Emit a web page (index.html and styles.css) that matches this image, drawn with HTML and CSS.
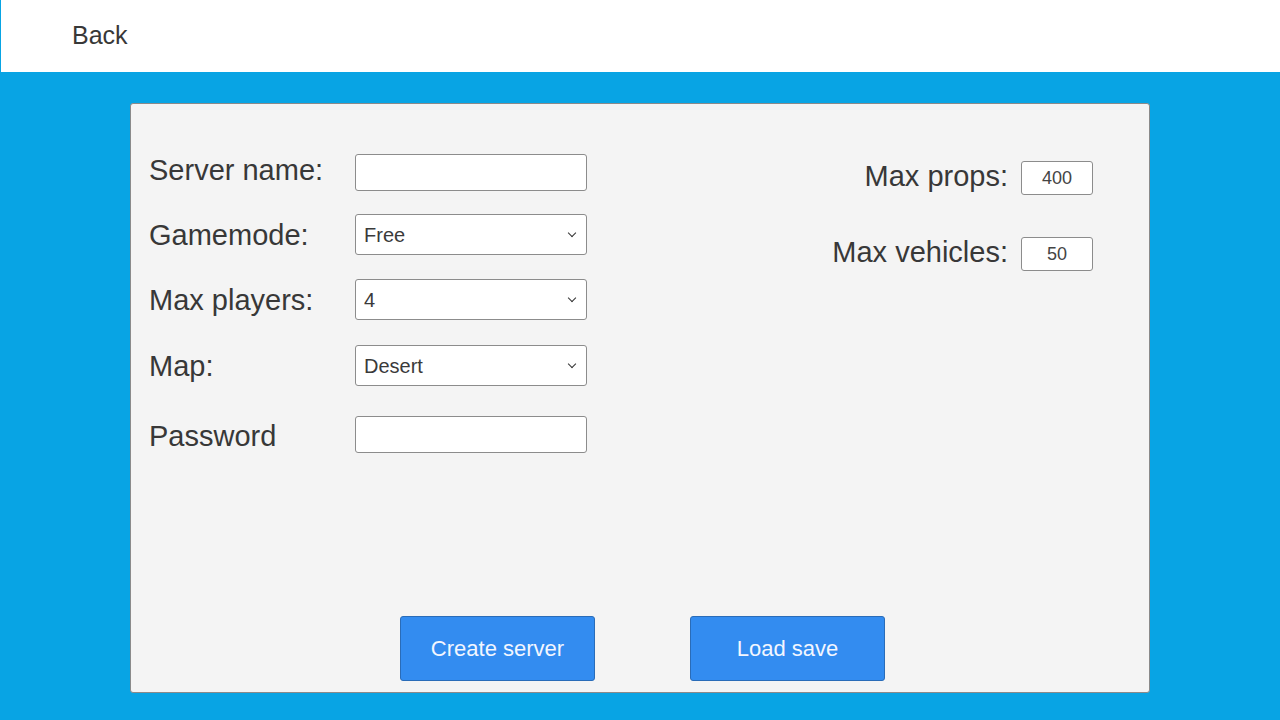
FILE: index.html
```html
<html>
    <head>
        <link rel="stylesheet" href="styles.css">
    </head>
    <body>
        <div class="topbar">
            <span class="back">Back</span>
        </div>

        <div class="panel">
            <div class="settings">
                <div class="left">
                    <div class="field first">
                        <label for="name">Server name:</label>
                        <input id="name" type="text">
                    </div>
                    <div class="field">
                        <label for="mode">Gamemode:</label>
                        <div class="dropdown"><select id="mode"><option>Free</option></select></div>
                    </div>
                    <div class="field">
                        <label for="players">Max players:</label>
                        <div class="dropdown"><select id="players"><option>4</option></select></div>
                    </div>
                    <div class="field map">
                        <label for="map">Map:</label>
                        <div class="dropdown"><select id="map"><option>Desert</option></select></div>
                    </div>
                    <div class="field pass">
                        <label for="password">Password</label>
                        <input id="password" type="text">
                    </div>
                </div>

                <div class="right">
                    <div class="limit">
                        <label for="props">Max props:</label>
                        <input id="props" class="small" type="text" value="400">
                    </div>
                    <div class="limit">
                        <label for="vehicles">Max vehicles:</label>
                        <input id="vehicles" class="small" type="text" value="50">
                    </div>
                </div>
            </div>

            <div class="actions">
                <button>Create server</button>
                <button>Load save</button>
            </div>
        </div>
    </body>
</html>
```

FILE: styles.css
```css
body {
    margin: 0;
    background: #08a4e4;
    font-family: "Liberation Sans", Arial, sans-serif;
    color: #383838;
    height: 720px;
    overflow: hidden;
}

.topbar {
    height: 72px;
    margin-left: 1px;
    background: #fff;
    display: flex;
    align-items: center;
    padding-left: 71px;
}
.topbar .back {
    font-size: 25px;
    margin-top: -1px;
}

.panel {
    box-sizing: border-box;
    width: 1020px;
    height: 590px;
    margin: 31px 0 0 130px;
    background: #f4f4f4;
    border: 1px solid #8a8a8a;
    border-radius: 3px;
    display: flex;
    flex-direction: column;
}

.settings {
    display: flex;
    justify-content: space-between;
    padding: 50px 56px 0 18px;
}

.field {
    display: flex;
    align-items: center;
    margin-top: 24px;
}
.field.first {
    margin-top: 0;
}
.field:nth-child(2) {
    margin-top: 23px;
}
.field.map {
    margin-top: 25px;
}
.field.pass {
    margin-top: 30px;
}
.field label {
    width: 206px;
    font-size: 29px;
    margin-top: 2px;
}
.field.first label {
    margin-top: -5px;
}
.field.pass label {
    margin-top: 4px;
}

input,
select {
    box-sizing: border-box;
    width: 232px;
    height: 37px;
    border: 1px solid #8c8c8c;
    border-radius: 3px;
    background: #fff;
    font-family: "Liberation Sans", Arial, sans-serif;
    color: #3a3a3a;
    font-size: 20px;
}

.dropdown {
    position: relative;
}
.dropdown::after {
    content: "";
    position: absolute;
    right: 12px;
    top: 16px;
    width: 5px;
    height: 5px;
    border-right: 1.5px solid #333;
    border-bottom: 1.5px solid #333;
    transform: rotate(45deg);
    pointer-events: none;
}
select {
    -webkit-appearance: none;
    appearance: none;
    height: 41px;
    padding-left: 8px;
}

.right {
    padding-top: 7px;
}
.limit {
    display: flex;
    align-items: center;
    justify-content: flex-end;
    margin-bottom: 42px;
}
.limit label {
    font-size: 29px;
    margin-right: 13px;
    margin-top: -3px;
}
input.small {
    width: 72px;
    height: 34px;
    font-size: 18px;
    color: #444;
    text-align: center;
}

.actions {
    margin-top: auto;
    margin-bottom: 11px;
    display: flex;
    justify-content: center;
    gap: 95px;
    padding-left: 5px;
}
.actions button {
    width: 195px;
    height: 65px;
    background: #338cf0;
    border: 1px solid #2a6cb8;
    border-radius: 3px;
    color: #f2f6ff;
    font-family: "Liberation Sans", Arial, sans-serif;
    font-size: 22px;
}
```
